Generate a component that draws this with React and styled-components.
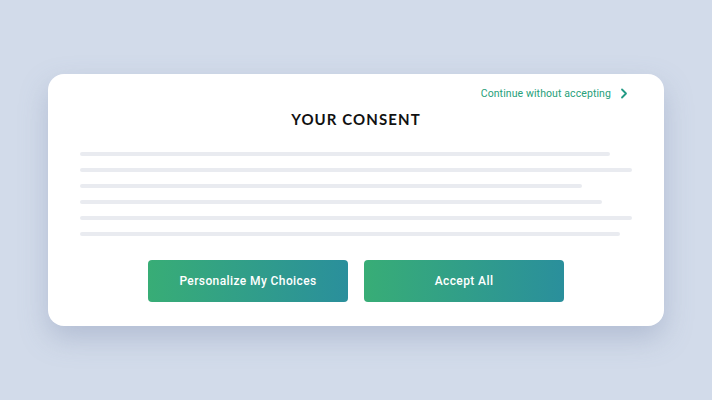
import React from "react";
import styled, { createGlobalStyle } from "styled-components";

const Global = createGlobalStyle`
  html, body { margin: 0; padding: 0; }
  body { background: #d2dbea; width: 712px; height: 400px; overflow: hidden; }
  * { box-sizing: border-box; }
`;

const Page = styled.div`
  width: 712px;
  height: 400px;
  display: flex;
  align-items: flex-start;
  justify-content: center;
  padding-top: 74px;
`;

const Card = styled.div`
  width: 616px;
  height: 252px;
  background: #fff;
  border-radius: 16px;
  box-shadow: 0 12px 28px rgba(120, 135, 170, 0.35);
  padding: 12px 32px 24px;
  display: flex;
  flex-direction: column;
`;

const TopRow = styled.div`
  display: flex;
  justify-content: flex-end;
  height: 16px;
`;

const SkipLink = styled.a`
  display: flex;
  align-items: center;
  gap: 9px;
  font-family: Roboto, "Liberation Sans", sans-serif;
  font-size: 10.5px;
  letter-spacing: 0.1px;
  color: #26a07a;
  text-decoration: none;
  margin-right: 4px;
`;

const Title = styled.h1`
  margin: 8px 0 0;
  text-align: center;
  font-family: "Lato", "Liberation Sans", sans-serif;
  font-weight: 700;
  font-size: 15px;
  letter-spacing: 1.1px;
  color: #111;
  line-height: 20px;
`;

const Lines = styled.div`
  margin-top: 23px;
  display: flex;
  flex-direction: column;
  gap: 12px;
`;

const Line = styled.div`
  height: 4px;
  border-radius: 2px;
  background: #e9ebf0;
  width: ${(p) => p.$w}%;
`;

const Buttons = styled.div`
  margin-top: 24px;
  display: flex;
  justify-content: center;
  gap: 16px;
`;

const Button = styled.button`
  width: 200px;
  height: 42px;
  border: none;
  border-radius: 4px;
  background: linear-gradient(90deg, #38ad76 0%, #2a8f9c 100%);
  color: #fff;
  font-family: Roboto, "Liberation Sans", sans-serif;
  font-weight: 500;
  font-size: 12px;
  letter-spacing: 0.4px;
  cursor: pointer;
`;

const widths = [96, 100, 91, 94.6, 100, 97.8];

export default function App() {
  return (
    <>
      <Global />
      <Page>
        <Card>
          <TopRow>
            <SkipLink href="#">
              Continue without accepting
              <svg width="8" height="11" viewBox="0 0 8 11" fill="none">
                <path d="M2 1.5 L6 5.5 L2 9.5" stroke="#239a85" strokeWidth="1.8" strokeLinecap="round" strokeLinejoin="round" />
              </svg>
            </SkipLink>
          </TopRow>
          <Title>YOUR CONSENT</Title>
          <Lines>
            {widths.map((w, i) => (
              <Line key={i} $w={w} />
            ))}
          </Lines>
          <Buttons>
            <Button>Personalize My Choices</Button>
            <Button>Accept All</Button>
          </Buttons>
        </Card>
      </Page>
    </>
  );
}
